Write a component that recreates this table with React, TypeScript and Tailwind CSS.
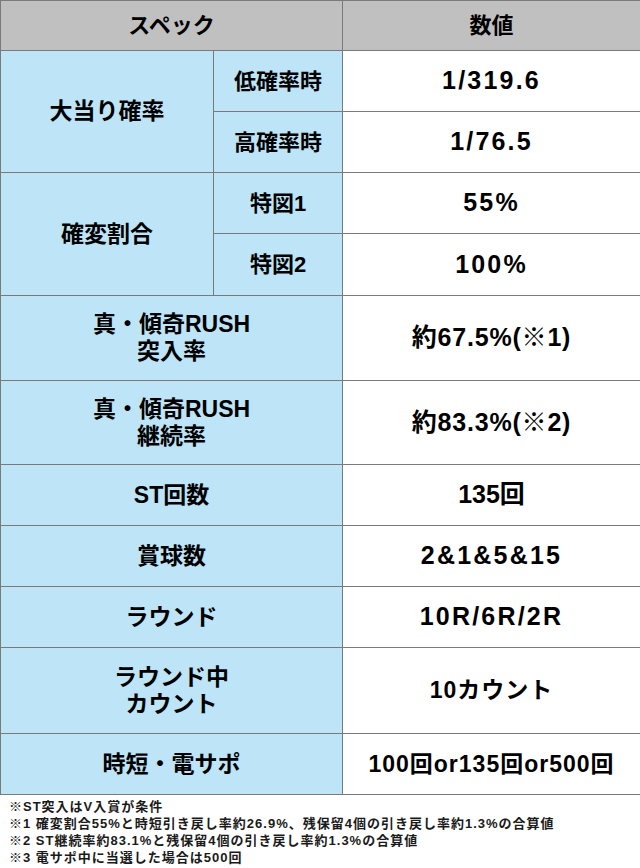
const JP = "font-['Liberation_Sans','Noto_Sans_CJK_JP',sans-serif] font-bold";

type Row = { label: React.ReactNode; value: string; h: string; v: string };

const wide = "text-[25px] tracking-[2.2px]";
const mixed = "text-[23px] tracking-[1px]";

const simpleRows: Row[] = [
  { label: <>真・傾奇RUSH<br />突入率</>, value: "約67.5%(※1)", h: "h-[85px]", v: "text-[25px] tracking-[0.8px]" },
  { label: <>真・傾奇RUSH<br />継続率</>, value: "約83.3%(※2)", h: "h-[84px]", v: "text-[25px] tracking-[0.8px]" },
  { label: "ST回数", value: "135回", h: "h-[61px]", v: "text-[25px] tracking-[0px]" },
  { label: "賞球数", value: "2&1&5&15", h: "h-[61px]", v: wide },
  { label: "ラウンド", value: "10R/6R/2R", h: "h-[61px]", v: wide },
  { label: <>ラウンド中<br />カウント</>, value: "10カウント", h: "h-[86px]", v: mixed },
  { label: "時短・電サポ", value: "100回or135回or500回", h: "h-[61px]", v: mixed },
];

const cellB = "border border-[#7a7a7a]";
const lbl = "bg-[#bde4f7] text-center text-[23px] leading-[27px] text-black";
const sub = "bg-[#bde4f7] text-center text-[22px] leading-[27px] text-black";
const val = "bg-white text-center text-black";

export default function App() {
  return (
    <div className={`w-[640px] h-[868px] bg-white ${JP}`}>
      <table className="w-[640px] border-collapse table-fixed">
        <colgroup>
          <col className="w-[213px]" />
          <col className="w-[129px]" />
          <col className="w-[298px]" />
        </colgroup>
        <tbody>
          <tr className="h-[50px] bg-[#c0c0c0]">
            <th colSpan={2} className={`${cellB} text-[22px] text-black`}>スペック</th>
            <th className={`${cellB} text-[22px] text-black`}>数値</th>
          </tr>
          <tr className="h-[61px]">
            <td rowSpan={2} className={`${cellB} ${lbl}`}>大当り確率</td>
            <td className={`${cellB} ${sub}`}>低確率時</td>
            <td className={`${cellB} ${val} ${wide}`}>1/319.6</td>
          </tr>
          <tr className="h-[61px]">
            <td className={`${cellB} ${sub}`}>高確率時</td>
            <td className={`${cellB} ${val} ${wide}`}>1/76.5</td>
          </tr>
          <tr className="h-[61px]">
            <td rowSpan={2} className={`${cellB} ${lbl}`}>確変割合</td>
            <td className={`${cellB} ${sub}`}>特図1</td>
            <td className={`${cellB} ${val} ${wide}`}>55%</td>
          </tr>
          <tr className="h-[62px]">
            <td className={`${cellB} ${sub}`}>特図2</td>
            <td className={`${cellB} ${val} ${wide}`}>100%</td>
          </tr>
          {simpleRows.map((r, i) => (
            <tr key={i} className={r.h}>
              <td colSpan={2} className={`${cellB} ${lbl}`}>{r.label}</td>
              <td className={`${cellB} ${val} ${r.v}`}>{r.value}</td>
            </tr>
          ))}
        </tbody>
      </table>
      <div className="pl-[9px] pt-[3px] text-[13px] leading-[17px] text-[#1a1a1a] tracking-[1px]">
        <p>※ST突入はV入賞が条件</p>
        <p>※1 確変割合55%と時短引き戻し率約26.9%、残保留4個の引き戻し率約1.3%の合算値</p>
        <p>※2 ST継続率約83.1%と残保留4個の引き戻し率約1.3%の合算値</p>
        <p>※3 電サポ中に当選した場合は500回</p>
      </div>
    </div>
  );
}
